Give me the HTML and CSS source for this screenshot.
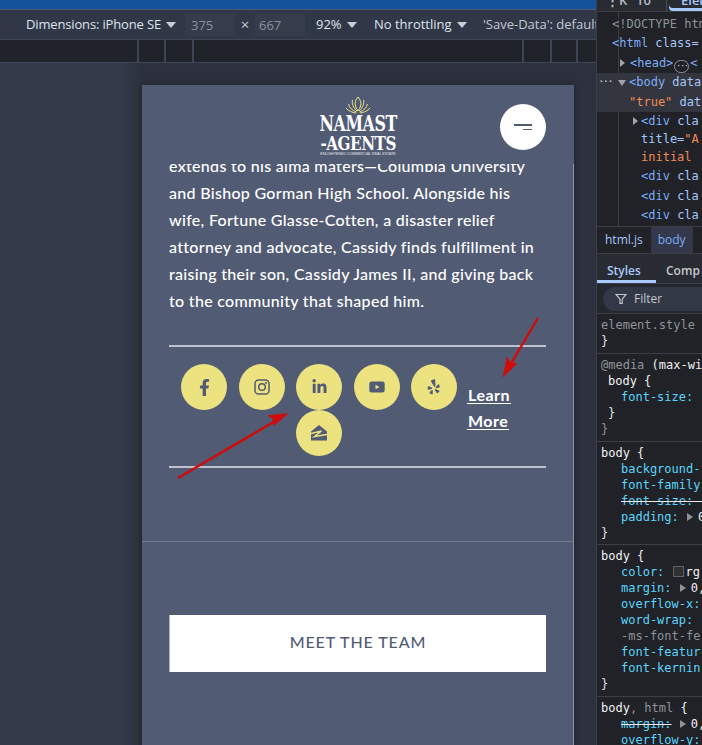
FILE: index.html
```html
<!DOCTYPE html>
<html lang="en">
<head>
<meta charset="utf-8">
<title>Device preview</title>
<link rel="stylesheet" href="styles.css">
</head>
<body>
<div class="app">
  <main class="preview">
    <div class="topstrip"></div>
    <div class="toolbar">
      <span class="tb-item tb-dim">Dimensions: iPhone SE<i class="caret"></i></span>
      <span class="tb-num">375</span>
      <span class="tb-x">×</span>
      <span class="tb-num tb-num2">667</span>
      <span class="tb-item tb-zoom">92%<i class="caret"></i></span>
      <span class="tb-item tb-thr">No throttling<i class="caret"></i></span>
      <span class="tb-item tb-save">'Save-Data': default</span>
    </div>
    <div class="ruler">
      <div class="rule-a"></div><div class="rule-b"></div><div class="rule-c"></div>
      <div class="ruler-gap"></div>
      <div class="rule-d"></div><div class="rule-e"></div><div class="rule-f"></div>
    </div>
    <div class="canvas">
      <div class="phone">
        <header class="site-head">
          <div class="logo">
            <svg class="lotus" viewBox="0 0 26 18" aria-hidden="true">
              <g fill="none" stroke="#ece27f" stroke-width="1">
                <path d="M13 1c-2.600 3-3.400 6-2.600 9 .6 2 1.600 3.500 2.600 5 1-1.500 2-3 2.600-5 .8-3 0-6-2.600-9z"/>
                <path d="M7.500 4c-.8 3.500.4 7.500 4.500 11M18.500 4c.8 3.500-.4 7.500-4.500 11"/>
                <path d="M3.500 8c.8 3.500 3.500 6.500 8 8M22.500 8c-.8 3.500-3.500 6.500-8 8"/>
                <path d="M1 12c2.500 3 6 4.500 10 5M25 12c-2.500 3-6 4.500-10 5"/>
              </g>
            </svg>
            <div class="logo-a">NAMAST</div>
            <div class="logo-b">-AGENTS</div>
            <div class="logo-c">ENLIGHTENED COMMERCIAL REAL ESTATE</div>
          </div>
          <button class="menu-btn" aria-label="Menu"><span class="bar-long"></span><span class="bar-short"></span></button>
        </header>
        <section class="bio">
          <div class="bio-clip">
            <p class="bio-text">extends to his alma maters—Columbia University<br>and Bishop Gorman High School. Alongside his<br>wife, Fortune Glasse-Cotten, a disaster relief<br>attorney and advocate, Cassidy finds fulfillment in<br>raising their son, Cassidy James II, and giving back<br>to the community that shaped him.</p>
          </div>
          <div class="social-row">
            <ul class="socials">
              <li class="soc"><svg class="ic-f" viewBox="0 0 320 512"><path d="M279.140 288l14.220-92.660h-88.910v-60.130c0-25.350 12.420-50.060 52.240-50.060h40.420V6.260S260.430 0 225.360 0c-73.220 0-121.080 44.380-121.080 124.720v70.620H22.890V288h81.390v224h100.170V288z"/></svg></li>
              <li class="soc"><svg class="ic-i" viewBox="0 0 16 16"><rect x="1" y="1" width="14" height="14" rx="3.600" class="stroke"/><circle cx="8" cy="8" r="3.300" class="stroke"/><circle cx="12" cy="4" r="1"/></svg></li>
              <li class="soc"><svg class="ic-l" viewBox="0 0 448 512"><path d="M100.280 448H7.400V148.900h92.880zM53.790 108.100C24.090 108.100 0 83.500 0 53.800a53.790 53.790 0 0 1 107.580 0c0 29.700-24.100 54.300-53.790 54.300zM447.900 448h-92.680V302.400c0-34.700-.7-79.200-48.290-79.200-48.290 0-55.690 37.700-55.690 76.700V448h-92.780V148.900h89.080v40.800h1.300c12.400-23.500 42.690-48.300 87.880-48.300 94 0 111.280 61.900 111.280 142.300V448z"/></svg></li>
              <li class="soc"><svg class="ic-y" viewBox="0 0 16 12"><path fill-rule="evenodd" d="M2.500.5h11a2.200 2.200 0 0 1 2.200 2.200v6.600a2.200 2.200 0 0 1-2.200 2.200h-11A2.200 2.200 0 0 1 .3 9.300V2.700A2.200 2.200 0 0 1 2.500.5zM6.500 3.700v4.600L10.500 6z"/></svg></li>
              <li class="soc"><svg class="ic-p" viewBox="0 0 16 18"><path d="M6.500.6c.8-.4 2-.7 2.500-.4.3.2.4.5.4.8l.2 7c0 .9-1 1.200-1.500.5L4.700 2.800c-.4-.6-.2-1.100.3-1.400z"/><path d="M1 8.800c-.3.900-.4 2.200-.2 2.900.1.400.5.600.9.500l3.600-1c.8-.2.800-1.300 0-1.600L2.200 8.200c-.6-.2-1 .1-1.200.6z"/><path d="M3.200 16c.7.600 1.800 1.200 2.500 1.400.4.100.7-.1.800-.5l.2-3.700c0-.8-1-1.200-1.500-.6L3.100 15c-.3.400-.2.800.1 1z"/><path d="M9 12.600l2 3.100c.3.400.7.500 1.100.3.700-.4 1.500-1.200 1.900-1.900.2-.4.100-.8-.3-1l-3.500-1.400c-.8-.3-1.500.2-1.200.9z"/><path d="M10.500 10.500l3.600-1c.4-.1.600-.4.500-.8-.1-.8-.6-1.900-1.200-2.500-.3-.3-.7-.3-1 0l-2.300 2.800c-.5.700.1 1.700.9 1.500z"/></svg></li>
              <li class="soc"><svg class="ic-z" viewBox="0 0 16 16"><path d="M8 0L16 6.500V15.500H0V6.500z"/><polyline class="z-line" points="0,8.500 10.500,6 3.500,11.500 16,9.500"/></svg></li>
            </ul>
            <div class="learn"><a href="#">Learn</a><a href="#">More</a></div>
          </div>
        </section>
        <section class="cta">
          <a class="cta-btn" href="#">MEET THE TEAM</a>
        </section>
      </div>
      <svg class="arrows" viewBox="0 0 596 745" aria-hidden="true">
        <g fill="#d10a0a" stroke="#d10a0a">
          <line x1="538" y1="318" x2="506" y2="372" stroke-width="2.400"/>
          <path d="M503 377l4-20 3.500 5.500 6.500 1z" stroke-width=".5"/>
          <line x1="178" y1="478" x2="282" y2="417" stroke-width="2.400"/>
          <path d="M288 413.500l-20 2 5 3.500 1 6.500z" stroke-width=".5"/>
        </g>
      </svg>
    </div>
  </main>
  <aside class="devtools">
    <div class="dt-tabs"><span class="dt-ic">⋮K</span><span class="dt-ic2">10</span><span class="dt-sep"></span><span class="dt-el">Elem</span></div>
    <div class="tree">
      <div class="row t0 c-dim">&lt;!DOCTYPE htm</div>
      <div class="row t0 c-tag">&lt;html <span class="c-attr">class=</span></div>
      <div class="row t1 c-tag"><i class="tri-r"></i>&lt;head&gt;<span class="dots">···</span>&lt;</div>
      <div class="sel">
        <div class="row t2 c-tag"><span class="ell">···</span><i class="tri-d"></i>&lt;body <span class="c-attr">data</span></div>
        <div class="row t3 c-attr"><span class="c-val">"true"</span> dat</div>
      </div>
      <div class="row t4 c-tag"><i class="tri-r"></i>&lt;div <span class="c-attr">cla</span></div>
      <div class="row row-s t5 c-attr">title=<span class="c-val">"A</span></div>
      <div class="row row-s t5 c-val">initial</div>
      <div class="row t5 c-tag">&lt;div <span class="c-attr">cla</span></div>
      <div class="row t5 c-tag">&lt;div <span class="c-attr">cla</span></div>
      <div class="row t5 c-tag">&lt;div <span class="c-attr">cla</span></div>
    </div>
    <div class="crumbs"><span class="crumb">html.js</span><span class="crumb crumb-on">body</span></div>
    <div class="subtabs"><span class="sub sub-on">Styles</span><span class="sub">Comp</span></div>
    <div class="filterbar">
      <div class="filter">
        <svg class="funnel" viewBox="0 0 12 12"><path d="M1 1.500h10L7.200 6.200v4.300H5V6.200z"/></svg>
        <span>Filter</span>
      </div>
    </div>
    <div class="rule">
      <div class="ln c-dim">element.style</div>
      <div class="ln">}</div>
    </div>
    <div class="rule">
      <div class="ln c-dim">@media <span class="c-white">(max-wi</span></div>
      <div class="ln in1 c-white">body {</div>
      <div class="ln in2"><span class="c-prop">font-size:</span></div>
      <div class="ln in1">}</div>
      <div class="ln c-dim">}</div>
    </div>
    <div class="rule rule-tight">
      <div class="ln c-white">body {</div>
      <div class="ln in2"><span class="c-prop">background-</span></div>
      <div class="ln in2"><span class="c-prop">font-family</span></div>
      <div class="ln in2"><span class="c-prop strike">font-size:&nbsp;&nbsp;&nbsp;</span></div>
      <div class="ln in2"><span class="c-prop">padding:</span> <i class="tri-s"></i><span class="c-white">0</span></div>
      <div class="ln">}</div>
    </div>
    <div class="rule">
      <div class="ln c-white">body {</div>
      <div class="ln in2"><span class="c-prop">color:</span> <i class="swatch"></i><span class="c-white">rg</span></div>
      <div class="ln in2"><span class="c-prop">margin:</span> <i class="tri-s"></i><span class="c-white">0,</span></div>
      <div class="ln in2"><span class="c-prop">overflow-x:</span></div>
      <div class="ln in2"><span class="c-prop">word-wrap:</span></div>
      <div class="ln in2 c-dim">-ms-font-fe</div>
      <div class="ln in2"><span class="c-prop">font-featur</span></div>
      <div class="ln in2"><span class="c-prop">font-kernin</span></div>
      <div class="ln">}</div>
    </div>
    <div class="rule">
      <div class="ln c-white">body<span class="c-dim">, html</span> {</div>
      <div class="ln in2"><span class="c-prop strike">margin:</span> <i class="tri-s"></i><span class="c-white">0,</span></div>
      <div class="ln in2"><span class="c-prop">overflow-y:</span></div>
    </div>
  </aside>
</div>
</body>
</html>
```

FILE: styles.css
```css
* { box-sizing: border-box; }
html, body { margin: 0; height: 100%; overflow: hidden; background: #202227; }
.app { display: flex; width: 702px; height: 745px; overflow: hidden; }

/* ---------- device preview ---------- */
.preview { position: relative; width: 596px; flex: none; display: flex; flex-direction: column; background: #333a49; overflow: hidden; }
.topstrip { height: 9px; background: #12539c; flex: none; }
.toolbar {
  height: 31px; flex: none; display: flex; align-items: center; background: #303848; overflow: hidden;
  border-top: 1px solid #4c5a70; border-bottom: 1px solid #3f4859;
  font: 13px/1 "Open Sans", "Liberation Sans", sans-serif; color: #dfe3ea; white-space: nowrap; padding-left: 26px;
}
.toolbar > span { flex: none; }
.tb-item { display: inline-flex; align-items: center; }
.caret { display: inline-block; width: 0; height: 0; margin-left: 5px; border-left: 5px solid transparent; border-right: 5px solid transparent; border-top: 6px solid #c9ced6; }
.tb-dim { width: 159px; letter-spacing: -.15px; }
.tb-num { width: 50px; height: 22px; line-height: 22px; padding-left: 6px; background: #353c4c; color: #8c919b; }
.tb-x { width: 20px; text-align: center; color: #c3c8d0; font-size: 15px; }
.toolbar > .tb-num2 { width: 50px; padding-left: 4px; }
.tb-zoom { width: 58px; margin-left: 11px; }
.tb-thr { width: 109px; }
.tb-save { color: #c3c8d0; white-space: nowrap; }
.ruler { height: 23px; flex: none; display: flex; background: #202329; border-bottom: 1px solid #3f4859; }
.ruler > div { height: 22px; flex: none; border-right: 2px solid #3c4558; }
.rule-a { width: 139px; }
.rule-b { width: 27px; }
.rule-c { width: 28px; }
.ruler > .ruler-gap { width: 302px; border: 0; }
.rule-d { width: 28px; }
.rule-e { width: 28px; }
.rule-f { width: 26px; }
.canvas { flex: 1; padding: 22px 22px 0 142px; background: linear-gradient(90deg, #333a49 0, #333a49 120px, #2c313d 142px, #2c313d 100%); }
.phone { width: 432px; height: 700px; background: #525b74; box-shadow: 0 0 6px rgba(0,0,0,.35); overflow: hidden; }

/* header */
.site-head { height: 79px; display: flex; justify-content: center; position: relative; }
.logo { width: 80px; padding-top: 11px; color: #fff; text-align: center; display: flex; flex-direction: column; align-items: center; }
.lotus { width: 26px; height: 18px; flex: none; }
.logo-a, .logo-b { font-family: "DejaVu Serif", "Liberation Serif", serif; font-weight: 700; white-space: nowrap; letter-spacing: -.6px; }
.logo-a { font-size: 23px; line-height: 18px; height: 18px; transform: scaleX(.69); }
.logo-b { font-size: 19px; line-height: 16px; height: 16px; margin-top: 3px; transform: scaleX(.8); }
.logo-c { font: 3.600px/4px "Liberation Sans", sans-serif; white-space: nowrap; color: #e6e8ee; margin-top: 1px; }
.menu-btn { position: absolute; top: 19px; right: 28px; width: 46px; height: 46px; border: 0; border-radius: 50%; background: #fff; padding: 0 14px 0 0; display: flex; flex-direction: column; align-items: flex-end; justify-content: center; gap: 3px; }
.bar-long { display: block; width: 18px; height: 1.500px; background: #525b74; }
.bar-short { display: block; width: 9px; height: 1.500px; background: #525b74; }

/* bio */
.bio { height: 378px; padding: 0 27px; border-right: 1px solid #8f95a8; border-bottom: 1px solid #737b92; margin-top: 4px; }
.bio-clip { margin-top: -4px; height: 183px; overflow: hidden; border-bottom: 2px solid #bfc3cf; }
.bio-text { margin: -12px 0 0; font: 500 16px/27px Lato, "Open Sans", sans-serif; letter-spacing: .3px; color: #fff; white-space: nowrap; }
.social-row { height: 121px; padding-top: 17px; display: flex; border-bottom: 2px solid #bfc3cf; }
.socials { list-style: none; margin: 0; padding: 0 0 0 6px; width: 294px; height: 92px; display: flex; flex-wrap: wrap; justify-content: center; align-content: flex-start; flex: none; }
.soc { width: 46px; height: 46px; margin: 0 5.750px; border-radius: 50%; background: #ece27f; display: flex; align-items: center; justify-content: center; }
.soc svg { fill: #525b74; display: block; }
.soc .stroke { fill: none; stroke: #525b74; stroke-width: 1.500; }
.soc .z-line { fill: none; stroke: #ece27f; stroke-width: 1.500; }
.ic-f { width: 11px; height: 17px; }
.ic-i { width: 16px; height: 16px; }
.ic-l { width: 15px; height: 16px; }
.ic-y { width: 16px; height: 12px; }
.ic-p { width: 14px; height: 16px; }
.ic-z { width: 16px; height: 16px; }
.learn { margin-left: 4px; padding-top: 14px; display: flex; flex-direction: column; align-items: flex-start; }
.learn a { font: 700 16px/17px Lato, "Open Sans", sans-serif; letter-spacing: .5px; color: #fff; text-decoration: none; border-bottom: 1px solid #fff; padding: 8px 1px 0; height: 26px; }

/* cta */
.cta { height: 300px; padding: 73px 28px 0 27px; border-right: 1px solid #8f95a8; }
.cta-btn { display: block; width: 377px; height: 57px; background: #fff; border-left: 1px solid #aeb2be; color: #525b74; text-align: center; font: 500 16px/53px Lato, "Open Sans", sans-serif; letter-spacing: .9px; text-decoration: none; }

.arrows { position: absolute; left: 0; top: 0; width: 596px; height: 745px; pointer-events: none; }

/* ---------- devtools ---------- */
.devtools { flex: 1; min-width: 0; border-left: 1px solid #3a3e47; background: #202227; font: 12px/16px "DejaVu Sans Mono", "Liberation Mono", monospace; color: #dfe1e5; white-space: nowrap; overflow: hidden; }
.dt-tabs { height: 12px; display: flex; align-items: flex-end; background: #282b31; border-bottom: 1px solid #3a3e47; font: 600 13px/12px "Open Sans", sans-serif; color: #b6bac2; overflow: hidden; position: relative; }
.dt-ic { position: absolute; left: 9px; top: -6px; }
.dt-ic2 { position: absolute; left: 39px; top: -6px; }
.dt-sep { position: absolute; left: 69px; top: 0; width: 1px; height: 11px; background: #4a4e57; }
.dt-el { position: absolute; left: 72px; top: -6px; width: 40px; height: 17px; padding-left: 12px; color: #a8c7fa; box-shadow: inset 0 -3px 0 #a8c7fa; border-radius: 0 0 0 4px; }
.tree { height: 214px; padding-top: 3px; background: linear-gradient(90deg, transparent 0, transparent 21px, #3a3e47 21px, #3a3e47 22px, transparent 22px); }
.row { height: 19.400px; line-height: 19.400px; position: relative; }
.row-s { height: 18px; line-height: 16px; }
.t0 { padding-left: 15px; }
.t1 { padding-left: 33px; }
.t2 { padding-left: 32px; }
.t3 { padding-left: 32px; }
.t4 { padding-left: 44px; }
.t5 { padding-left: 44px; }
.sel { background: #33363e; }
.c-tag { color: #7cacf8; }
.c-attr { color: #a8c7fa; }
.c-val { color: #f28b54; }
.c-dim { color: #8f9298; }
.c-white { color: #f0f1f3; }
.c-prop { color: #5cd5fb; }
.strike { text-decoration: line-through; text-decoration-color: #e8eaed; }
.tri-r { display: inline-block; border-left: 5px solid #a0a4ab; border-top: 4.500px solid transparent; border-bottom: 4.500px solid transparent; position: absolute; margin-left: -10px; top: 5px; }
.t4 .tri-r { margin-left: -8px; }
.tri-d { position: absolute; left: 21px; top: 7px; border-top: 6px solid #a0a4ab; border-left: 4.500px solid transparent; border-right: 4.500px solid transparent; }
.ell { position: absolute; left: 1px; top: -1px; color: #c7cad0; font-size: 11px; letter-spacing: -2px; }
.dots { display: inline-block; width: 15px; height: 13px; line-height: 11px; margin: 0 1px; border: 1px solid #8f9298; border-radius: 7px; color: #c7cad0; text-align: center; font-size: 9px; letter-spacing: -1.500px; vertical-align: -2px; }
.crumbs { height: 28px; background: #202227; border-top: 1px solid #3a3e47; border-bottom: 1px solid #3a3e47; display: flex; font: 12px/25px "Open Sans", sans-serif; color: #a8c7fa; }
.crumb { padding: 0 8px; }
.crumb-on { background: #33394a; color: #7cacf8; padding: 0 7px; }
.subtabs { height: 30px; display: flex; gap: 10px; background: #282b31; border-bottom: 1px solid #3a3e47; font: 600 12px/33px "Open Sans", sans-serif; color: #c4c7cc; }
.sub-on { color: #a8c7fa; width: 59px; padding-left: 10px; box-shadow: inset 0 -3px 0 #a8c7fa; }
.filterbar { height: 30px; padding: 3px 0 0 6px; border-bottom: 1px solid #3a3e47; background: #24272d; }
.filter { height: 24px; border-radius: 12px 0 0 12px; background: #323846; display: flex; align-items: center; gap: 7px; padding-left: 12px; font: 12px/1 "Open Sans", sans-serif; color: #c4c7cc; }
.funnel { width: 12px; height: 12px; fill: none; stroke: #c4c7cc; stroke-width: 1.200; }
.rule { padding: 3px 0 4px 4px; border-bottom: 1px solid #3a3e47; font-size: 12px; line-height: 16px; }
.rule-tight { padding-bottom: 3px; }
.ln { height: 16px; }
.in1 { padding-left: 7px; }
.in2 { padding-left: 20px; }
.tri-s { display: inline-block; border-left: 6px solid #8f9298; border-top: 4px solid transparent; border-bottom: 4px solid transparent; margin: 0 5px 0 1px; }
.swatch { display: inline-block; width: 11px; height: 11px; background: #303030; border: 1px solid #5e6066; margin: 0 2px 0 1px; vertical-align: -1px; }
```
